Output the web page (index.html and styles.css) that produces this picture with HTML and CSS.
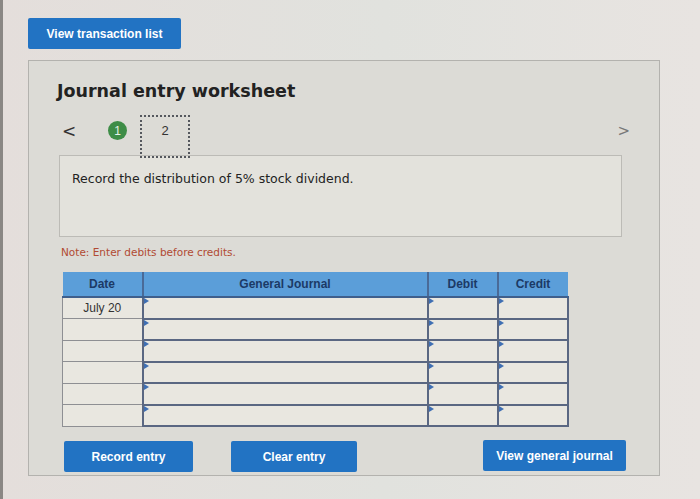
FILE: index.html
```html
<!DOCTYPE html>
<html lang="en">
<head>
  <meta charset="UTF-8">
  <title>Journal entry worksheet</title>
  <link rel="stylesheet" href="styles.css">
</head>
<body>
  <div class="page">
    <button class="btn btn-top">View transaction list</button>

    <div class="panel">
      <h2>Journal entry worksheet</h2>

      <!-- step navigation -->
      <div class="steps">
        <span class="arrow">&lt;</span>
        <span class="step done">1</span>
        <span class="step current">2</span>
        <span class="arrow next">&gt;</span>
      </div>

      <div class="task">Record the distribution of 5% stock dividend.</div>

      <p class="note">Note: Enter debits before credits.</p>

      <table class="journal">
        <thead>
          <tr>
            <th class="c-date">Date</th>
            <th class="c-acct">General Journal</th>
            <th class="c-num">Debit</th>
            <th class="c-num">Credit</th>
          </tr>
        </thead>
        <tbody>
          <tr><td class="c-date">July 20</td><td class="in"></td><td class="in"></td><td class="in"></td></tr>
          <tr><td class="c-date"></td><td class="in"></td><td class="in"></td><td class="in"></td></tr>
          <tr><td class="c-date"></td><td class="in"></td><td class="in"></td><td class="in"></td></tr>
          <tr><td class="c-date"></td><td class="in"></td><td class="in"></td><td class="in"></td></tr>
          <tr><td class="c-date"></td><td class="in"></td><td class="in"></td><td class="in"></td></tr>
          <tr><td class="c-date"></td><td class="in"></td><td class="in"></td><td class="in"></td></tr>
        </tbody>
      </table>

      <div class="actions">
        <button class="btn btn-record">Record entry</button>
        <button class="btn btn-clear">Clear entry</button>
        <button class="btn btn-view">View general journal</button>
      </div>
    </div>
  </div>
</body>
</html>
```

FILE: styles.css
```css
* {
  box-sizing: border-box;
}
body {
  margin: 0;
  background: linear-gradient(90deg, #e4dedb 0%, #e1e2de 55%, #e8e4e1 100%);
  font-family: "DejaVu Sans", Verdana, sans-serif;
  color: #222;
  height: 499px;
  overflow: hidden;
  border-left: 3px solid #8a8784;
}
.page {
  padding: 18px 0 0 25px;
}
.btn {
  border: 0;
  border-radius: 2px;
  background: #2273c3;
  color: #fff;
  font-family: "Liberation Sans", Arial, sans-serif;
  font-weight: bold;
  font-size: 12px;
  height: 31px;
  padding: 0;
  display: block;
}
.btn-top {
  width: 153px;
}
.panel {
  margin-top: 11px;
  width: 632px;
  height: 416px;
  background: #dcdbd6;
  border: 1px solid #b3b2ae;
  padding: 20px 0 0 28px;
}
h2 {
  margin: 0;
  font-size: 17.5px;
  font-weight: bold;
  color: #222;
}
.steps {
  display: flex;
  align-items: center;
  height: 43px;
  margin-top: 14px;
}
.arrow {
  font-size: 17px;
  color: #333;
  width: 51px;
  padding-left: 5px;
  margin-bottom: 12px;
}
.arrow.next {
  margin-left: auto;
  margin-right: 29px;
  width: auto;
  font-size: 15px;
  color: #777;
}
.step {
  font-family: "Liberation Sans", Arial, sans-serif;
  font-size: 12px;
}
.step.done {
  width: 19px;
  height: 19px;
  border-radius: 50%;
  background: #3e8d47;
  color: #e8f2e8;
  display: flex;
  align-items: center;
  justify-content: center;
  margin-right: 13px;
  margin-bottom: 12px;
}
.step.current {
  width: 50px;
  height: 43px;
  border: 2px dotted #55585e;
  display: flex;
  align-items: center;
  justify-content: center;
  padding-bottom: 12px;
  font-size: 13px;
  color: #333;
}
.task {
  margin: -3px 0 0 2px;
  width: 563px;
  height: 82px;
  background: #e3e2dc;
  border: 1px solid #bcbbb6;
  font-size: 12.5px;
  padding: 15px 0 0 12px;
}
.note {
  margin: 9px 0 0 4px;
  font-size: 10.5px;
  color: #b14a33;
}
.journal {
  margin: 14px 0 0 5px;
  border-collapse: collapse;
  font-family: "Liberation Sans", Arial, sans-serif;
  font-size: 12px;
}
.journal th {
  background: #5b9ed9;
  color: #1b3a66;
  height: 25px;
  font-weight: bold;
  border-left: 2px solid #4a6a97;
  border-bottom: 2px solid #3f5f8c;
}
.journal th:first-child {
  border-left: 0;
}
.c-date {
  width: 80px;
}
.c-acct {
  width: 285px;
}
.c-num {
  width: 70px;
}
.journal td {
  height: 21.5px;
  background: #e9e7e0;
  padding: 0;
}
.journal td.c-date {
  border: 1px solid #8e8f93;
  text-align: center;
  color: #333;
  font-size: 12px;
}
.journal td.in {
  position: relative;
  border: 2px solid #5a6782;
}
.journal td.in::before {
  content: "";
  position: absolute;
  left: 0;
  top: 0;
  border-left: 5px solid #3f6fb3;
  border-top: 3px solid transparent;
  border-bottom: 3px solid transparent;
}
.actions {
  display: flex;
  margin: 14px 0 0 7px;
}
.btn-record {
  width: 129px;
}
.btn-clear {
  width: 126px;
  margin-left: 38px;
}
.btn-view {
  width: 143px;
  margin-left: 126px;
  margin-top: -1px;
}
```
